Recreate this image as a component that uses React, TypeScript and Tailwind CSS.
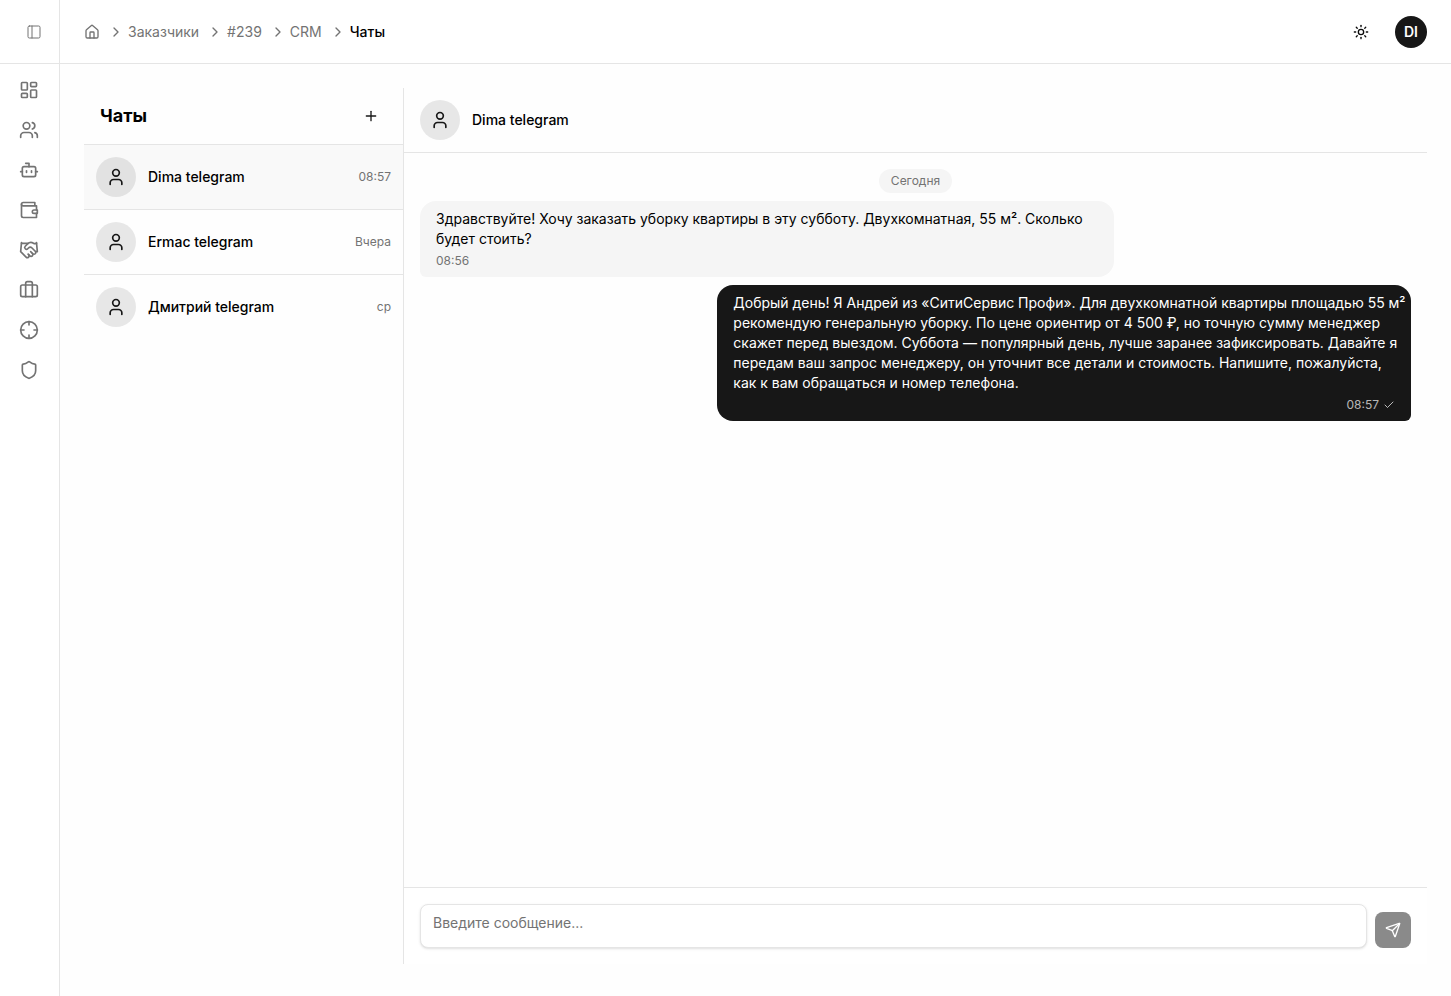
import React from "react";
import {
  Bot,
  Briefcase,
  Check,
  ChevronRight,
  Crosshair,
  Handshake,
  House,
  LayoutDashboard,
  PanelLeft,
  Plus,
  Send,
  Shield,
  Sun,
  User,
  Users,
} from "lucide-react";

function WalletIcon({ size = 20 }: { size?: number }) {
  return (
    <svg
      width={size}
      height={size}
      viewBox="0 0 24 24"
      fill="none"
      stroke="currentColor"
      strokeWidth={2}
      strokeLinecap="round"
      strokeLinejoin="round"
      aria-hidden="true"
    >
      <path d="M21 12V7H5a2 2 0 0 1 0-4h14v4" />
      <path d="M3 5v14a2 2 0 0 0 2 2h16v-5" />
      <path d="M18 12a2 2 0 0 0 0 4h4v-4Z" />
    </svg>
  );
}

const navItems = [
  { label: "Панель", Icon: LayoutDashboard },
  { label: "Заказчики", Icon: Users },
  { label: "Боты", Icon: Bot },
  { label: "Кошелёк", Icon: WalletIcon },
  { label: "Партнёры", Icon: Handshake },
  { label: "Проекты", Icon: Briefcase },
  { label: "Цели", Icon: Crosshair },
  { label: "Безопасность", Icon: Shield },
];

const chats = [
  { name: "Dima telegram", time: "08:57", active: true },
  { name: "Ermac telegram", time: "Вчера", active: false },
  { name: "Дмитрий telegram", time: "ср", active: false },
];

const crumbs = ["Заказчики", "#239", "CRM"];

function Avatar() {
  return (
    <span className="flex size-10 shrink-0 items-center justify-center rounded-full bg-black/9 text-neutral-900">
      <User size={20} />
    </span>
  );
}

function Sidebar() {
  return (
    <aside className="flex w-15 shrink-0 flex-col border-r border-neutral-200 bg-white">
      <div className="flex h-16 items-center justify-end border-b border-neutral-200 pr-[17px]">
        <button type="button" aria-label="Свернуть меню" className="flex size-4 items-center justify-center text-neutral-500">
          <PanelLeft size={16} strokeWidth={1.5} />
        </button>
      </div>
      <nav className="flex flex-col items-start gap-1 px-[11px] pt-2">
        {navItems.map(({ label, Icon }) => (
          <a key={label} href="#" aria-label={label} className="flex size-9 items-center justify-center text-neutral-500">
            <Icon size={20} />
          </a>
        ))}
      </nav>
    </aside>
  );
}

function Header() {
  return (
    <header className="flex h-16 shrink-0 items-center justify-between border-b border-neutral-200 bg-white px-6">
      <nav className="flex items-center text-sm text-neutral-500">
        <a href="#" aria-label="Главная">
          <House size={16} />
        </a>
        {crumbs.map((c) => (
          <React.Fragment key={c}>
            <ChevronRight size={16} className="mr-1 ml-2" />
            <a href="#">{c}</a>
          </React.Fragment>
        ))}
        <ChevronRight size={16} className="mr-1 ml-2" />
        <span className="font-medium text-black">Чаты</span>
      </nav>
      <div className="flex items-center gap-4">
        <button type="button" aria-label="Сменить тему" className="flex size-9 items-center justify-center text-neutral-950">
          <Sun size={16} />
        </button>
        <button type="button" className="flex size-8 items-center justify-center rounded-full bg-neutral-900 text-sm font-semibold text-white">
          DI
        </button>
      </div>
    </header>
  );
}

function ChatList() {
  return (
    <section className="flex w-80 shrink-0 flex-col border-r border-neutral-200">
      <div className="flex h-[57px] items-center justify-between border-b border-neutral-200 px-4">
        <h2 className="text-lg font-bold">Чаты</h2>
        <button type="button" aria-label="Новый чат" className="flex size-8 items-center justify-center text-neutral-900">
          <Plus size={16} />
        </button>
      </div>
      <ul className="divide-y divide-neutral-200">
        {chats.map((chat) => (
          <li key={chat.name}>
            <button
              type="button"
              className={
                chat.active
                  ? "flex w-full items-center gap-3 bg-[#f9f9f9] p-3 text-left"
                  : "flex w-full items-center gap-3 p-3 text-left"
              }
            >
              <Avatar />
              <span className="flex-1 truncate text-sm font-medium">{chat.name}</span>
              <span className="text-xs text-neutral-500">{chat.time}</span>
            </button>
          </li>
        ))}
      </ul>
    </section>
  );
}

function Conversation() {
  return (
    <section className="flex min-w-0 flex-1 flex-col">
      <div className="flex items-center gap-3 border-b border-neutral-200 px-4 py-3">
        <Avatar />
        <h3 className="text-sm font-medium">Dima telegram</h3>
      </div>
      <div className="flex flex-1 flex-col gap-2 overflow-y-auto p-4">
        <span className="self-center rounded-full bg-neutral-100 px-3 py-1 text-xs text-neutral-500">Сегодня</span>
        <div className="max-w-[70%] self-start rounded-2xl rounded-bl-md bg-neutral-100 px-4 py-2">
          <p className="text-sm">
            Здравствуйте! Хочу заказать уборку квартиры в эту субботу. Двухкомнатная, 55 м². Сколько будет стоить?
          </p>
          <div className="mt-1 text-xs text-neutral-500">08:56</div>
        </div>
        <div className="max-w-[70%] self-end rounded-2xl rounded-br-md bg-neutral-900 py-2 pl-4 text-white">
          <p className="text-sm">
            Добрый день! Я Андрей из «СитиСервис Профи». Для двухкомнатной квартиры площадью 55&nbsp;м² рекомендую
            генеральную уборку. По цене ориентир от 4&nbsp;500&nbsp;₽, но точную сумму менеджер скажет перед выездом.
            Суббота — популярный день, лучше заранее зафиксировать. Давайте я передам ваш запрос менеджеру, он уточнит
            все детали и стоимость. Напишите, пожалуйста, как&nbsp;к&nbsp;вам обращаться и номер телефона.
          </p>
          <div className="mt-1 flex items-center justify-end gap-1 pr-4 text-xs text-white/70">
            08:57
            <Check size={12} />
          </div>
        </div>
      </div>
      <form className="flex items-end gap-2 border-t border-neutral-200 bg-white p-4" onSubmit={(e) => e.preventDefault()}>
        <textarea
          aria-label="Сообщение"
          placeholder="Введите сообщение..."
          rows={1}
          className="h-11 min-w-0 flex-1 resize-none rounded-lg border border-neutral-200 bg-white px-3 py-2 text-sm shadow-sm placeholder:text-neutral-500"
        />
        <button
          type="submit"
          aria-label="Отправить"
          className="flex size-9 items-center justify-center rounded-lg bg-neutral-900 text-white opacity-50"
        >
          <Send size={16} />
        </button>
      </form>
    </section>
  );
}

export default function App() {
  return (
    <div className="flex min-h-screen bg-[#fefefe] font-['Inter',sans-serif] text-black">
      <Sidebar />
      <div className="flex min-w-0 flex-1 flex-col">
        <Header />
        <main className="p-6">
          <div className="flex h-[calc(100vh-120px)]">
            <ChatList />
            <Conversation />
          </div>
        </main>
      </div>
    </div>
  );
}
